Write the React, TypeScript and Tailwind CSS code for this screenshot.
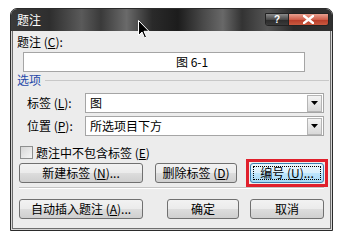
import React from "react";

const font = { fontFamily: '"Noto Sans CJK SC", "Liberation Sans", sans-serif' };

function U({ children }: { children: React.ReactNode }) {
  return <span className="underline underline-offset-[1px]">{children}</span>;
}

function Btn({
  w,
  children,
  focus,
}: {
  w: string;
  children: React.ReactNode;
  focus?: boolean;
}) {
  return (
    <div
      className={`${w} h-[20px] rounded-[3px] border ${
        focus
          ? "border-[#3c7fb1] bg-[linear-gradient(#eaf6fd_0%,#d9f0fc_50%,#bee6fd_51%,#a7d9f5_100%)]"
          : "border-[#707070] bg-[linear-gradient(#f2f2f2_0%,#ebebeb_50%,#dddddd_51%,#cfcfcf_100%)]"
      } flex items-center justify-center text-[12px] leading-[14px] text-black p-[2px]`}
    >
      <div
        className={`w-full h-full flex items-center justify-center ${
          focus ? "border border-dotted border-black" : ""
        }`}
      >
        {children}
      </div>
    </div>
  );
}

function Select({ text }: { text: string }) {
  return (
    <div className="w-[239px] h-[20px] border border-[#a5a5a5] bg-white flex items-center">
      <div className="flex-1 pl-[4px] text-[12px] leading-[14px] text-black">{text}</div>
      <div className="w-[15px] h-[17px] mr-[1px] border border-[#b5b5b5] bg-[linear-gradient(#f4f4f4,#d8d8d8)] flex items-center justify-center">
        <svg width="7" height="4" viewBox="0 0 7 4">
          <path d="M0 0 H7 L3.5 4 Z" fill="#000" />
        </svg>
      </div>
    </div>
  );
}

export default function App() {
  return (
    <div
      className="relative w-[358px] h-[245px] bg-white overflow-hidden"
      style={font}
    >
      <div className="ml-[10px] mt-[8px] w-[323px] h-[223px] rounded-t-[7px] border border-[#2b2b2b] bg-[#d6d6d6] flex flex-col overflow-hidden">
        {/* Title bar */}
        <div className="h-[22px] shrink-0 flex items-start bg-[linear-gradient(90deg,#3a3a3a_0%,#2e2e2e_12%,#5a5a5a_22%,#3a3a3a_28%,#6a6a6a_36%,#2a2a2a_44%,#1c1c1c_52%,#4a4a4a_60%,#686868_66%,#333_72%,#555_80%,#2a2a2a_88%,#303030_100%)]">
          <div className="pl-[6px] pt-[4px] text-[12px] leading-[14px] text-white">
            题注
          </div>
          <div className="ml-auto mr-[3px] mt-[4px] flex h-[13px] rounded-b-[3px] border border-[#222] overflow-hidden">
            <div className="w-[23px] h-full bg-[linear-gradient(#8a8a8a,#4a4a4a_50%,#2a2a2a_51%,#3a3a3a)] border-r border-[#222] flex items-center justify-center text-white text-[10px] font-bold leading-[10px]" style={{ fontFamily: '"Liberation Sans", sans-serif' }}>
              ?
            </div>
            <div className="w-[39px] h-full bg-[linear-gradient(#e8a090,#d0604c_50%,#b83a28_51%,#c85a40)] flex items-center justify-center">
              <svg width="11" height="9" viewBox="0 0 11 9">
                <path d="M1 1 L10 8 M10 1 L1 8" stroke="#fff" strokeWidth="2.4" strokeLinecap="square" />
              </svg>
            </div>
          </div>
        </div>
        {/* Body frame */}
        <div className="flex-1 px-[1px] pb-[1px] flex">
          <div className="flex-1 bg-[#ececec] border-x border-b border-[#6e6e6e] flex flex-col text-[12px] leading-[14px] text-black">
            <div className="ml-[4px] mt-[4px] h-[14px]">
              题注 (<U>C</U>):
            </div>
            <div className="ml-[10px] mt-[3px] w-[282px] h-[20px] border border-[#a5a5a5] bg-white flex items-center pl-[152px]">
              图 6-1
            </div>
            <div className="mt-[1px] h-[14px] flex items-center">
              <span className="ml-[2px] px-[2px] text-[#1f48a8]">选项</span>
              <div className="flex-1 h-px bg-[#c8c8c8] mr-[1px] ml-[2px]" />
            </div>
            <div className="mt-[6px] flex items-center">
              <div className="ml-[14px] w-[58px]">
                标签 (<U>L</U>):
              </div>
              <Select text="图" />
            </div>
            <div className="mt-[3px] flex items-center">
              <div className="ml-[14px] w-[58px]">
                位置 (<U>P</U>):
              </div>
              <Select text="所选项目下方" />
            </div>
            <div className="mt-[10px] h-[13px] flex items-center">
              <div className="ml-[7px] w-[13px] h-[13px] border border-[#8e8f8f] bg-[linear-gradient(135deg,#d6d6d6,#f6f6f6)]" />
              <div className="ml-[3px]">
                题注中不包含标签 (<U>E</U>)
              </div>
            </div>
            <div className="mt-[4px] flex items-center">
              <div className="ml-[6px]">
                <Btn w="w-[124px]">
                  新建标签 (<U>N</U>)...
                </Btn>
              </div>
              <div className="ml-[12px]">
                <Btn w="w-[82px]">
                  删除标签 (<U>D</U>)
                </Btn>
              </div>
              <div className="ml-[13px] relative">
                <Btn w="w-[74px]" focus>
                  编号 (<U>U</U>)...
                </Btn>
                <div className="absolute -left-[4px] -top-[4px] -right-[4px] -bottom-[4px] border-[3px] border-[#e0202c]" />
              </div>
            </div>
            <div className="mt-[4px] ml-[6px] mr-[6px] h-[2px] border-t border-[#c4c4c4] border-b border-b-white" />
            <div className="mt-[10px] flex items-center">
              <div className="ml-[6px]">
                <Btn w="w-[124px]">
                  自动插入题注 (<U>A</U>)...
                </Btn>
              </div>
              <div className="ml-[24px]">
                <Btn w="w-[72px]">确定</Btn>
              </div>
              <div className="ml-[11px]">
                <Btn w="w-[74px]">取消</Btn>
              </div>
            </div>
          </div>
        </div>
      </div>
      {/* mouse cursor */}
      <svg
        className="absolute left-[138px] top-[20px]"
        width="12"
        height="19"
        viewBox="0 0 12 19"
      >
        <path
          d="M0.5 0.5 L0.5 15.5 L4 12 L6.5 18 L8.5 17 L6 11.3 L11 11.3 Z"
          fill="#000"
          stroke="#fff"
          strokeWidth="1"
        />
      </svg>
    </div>
  );
}
